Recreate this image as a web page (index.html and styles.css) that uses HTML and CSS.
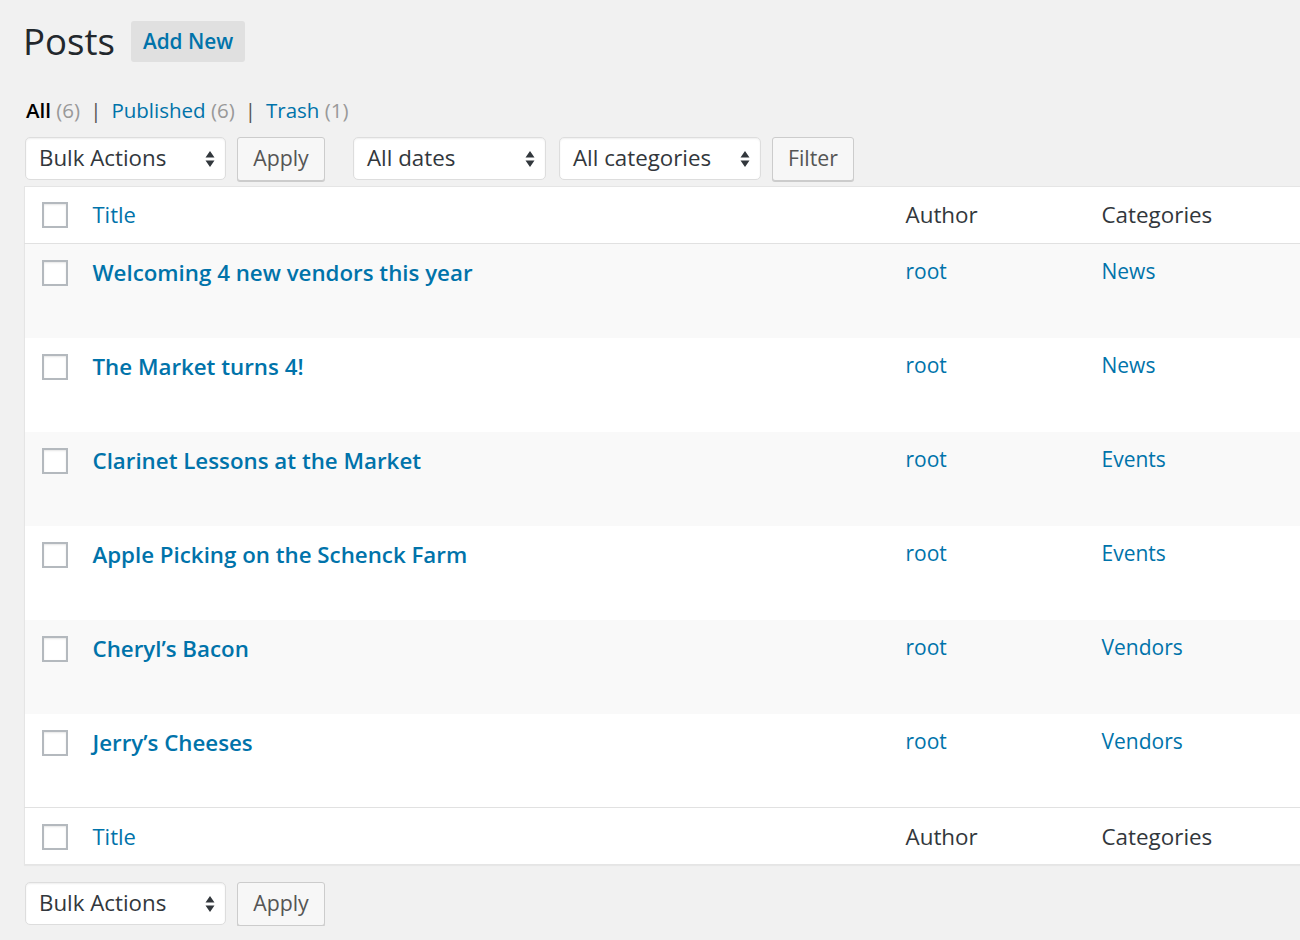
FILE: index.html
```html
<!DOCTYPE html>
<html>
<head>
<meta charset="utf-8">
<link rel="stylesheet" href="styles.css">
</head>
<body>
<div class="wrap">
  <div class="title-bar">
    <h1 class="page-title">Posts</h1>
    <a class="add-new">Add New</a>
  </div>
  <ul class="subsubsub">
    <li><a class="current">All <span class="count">(6)</span></a><span class="sep">|</span></li>
    <li><a>Published <span class="count">(6)</span></a><span class="sep">|</span></li>
    <li><a>Trash <span class="count">(1)</span></a></li>
  </ul>
  <div class="tablenav">
    <div class="select sel-bulk">Bulk Actions<span class="arrows"><svg width="10" height="18" viewBox="0 0 10 18"><path d="M5 1 L9.5 7.5 H0.5 Z M0.5 10.5 H9.5 L5 17 Z" fill="#32373c"/></svg></span></div>
    <button class="btn btn-apply">Apply</button>
    <div class="select sel-dates">All dates<span class="arrows"><svg width="10" height="18" viewBox="0 0 10 18"><path d="M5 1 L9.5 7.5 H0.5 Z M0.5 10.5 H9.5 L5 17 Z" fill="#32373c"/></svg></span></div>
    <div class="select sel-cats">All categories<span class="arrows"><svg width="10" height="18" viewBox="0 0 10 18"><path d="M5 1 L9.5 7.5 H0.5 Z M0.5 10.5 H9.5 L5 17 Z" fill="#32373c"/></svg></span></div>
    <button class="btn btn-filter">Filter</button>
  </div>
  <table class="posts">
    <colgroup>
      <col class="c-check"><col class="c-title"><col class="c-author"><col class="c-cats">
    </colgroup>
    <thead>
      <tr><td class="check"><span class="cb"></span></td><th class="sortable"><a>Title</a></th><th>Author</th><th>Categories</th></tr>
    </thead>
    <tbody>
      <tr class="alt"><td class="check"><span class="cb"></span></td><td class="title-cell"><a class="row-title">Welcoming 4 new vendors this year</a></td><td><a>root</a></td><td><a>News</a></td></tr>
      <tr><td class="check"><span class="cb"></span></td><td class="title-cell"><a class="row-title">The Market turns 4!</a></td><td><a>root</a></td><td><a>News</a></td></tr>
      <tr class="alt"><td class="check"><span class="cb"></span></td><td class="title-cell"><a class="row-title">Clarinet Lessons at the Market</a></td><td><a>root</a></td><td><a>Events</a></td></tr>
      <tr><td class="check"><span class="cb"></span></td><td class="title-cell"><a class="row-title">Apple Picking on the Schenck Farm</a></td><td><a>root</a></td><td><a>Events</a></td></tr>
      <tr class="alt"><td class="check"><span class="cb"></span></td><td class="title-cell"><a class="row-title">Cheryl’s Bacon</a></td><td><a>root</a></td><td><a>Vendors</a></td></tr>
      <tr><td class="check"><span class="cb"></span></td><td class="title-cell"><a class="row-title">Jerry’s Cheeses</a></td><td><a>root</a></td><td><a>Vendors</a></td></tr>
    </tbody>
    <tfoot>
      <tr><td class="check"><span class="cb"></span></td><th class="sortable"><a>Title</a></th><th>Author</th><th>Categories</th></tr>
    </tfoot>
  </table>
  <div class="tablenav bottom">
    <div class="select sel-bulk">Bulk Actions<span class="arrows"><svg width="10" height="18" viewBox="0 0 10 18"><path d="M5 1 L9.5 7.5 H0.5 Z M0.5 10.5 H9.5 L5 17 Z" fill="#32373c"/></svg></span></div>
    <button class="btn btn-apply">Apply</button>
  </div>
</div>
</body>
</html>
```

FILE: styles.css
```css
html, body {
  margin: 0;
  padding: 0;
  background: #f1f1f1;
  overflow: hidden;
}
body {
  font-family: "Open Sans", "Noto Sans", sans-serif;
  color: #23282d;
  font-size: 21px;
}
.wrap {
  padding: 0 0 0 24px;
}
.title-bar {
  display: flex;
  align-items: center;
  padding-top: 21px;
  height: 41px;
}
.page-title {
  margin: 0 0 0 -1px;
  font-size: 36.6px;
  font-weight: 400;
  line-height: 41px;
  color: #23282d;
}
.add-new {
  margin-left: 16px;
  height: 41px;
  line-height: 41px;
  padding: 0 12px;
  background: #e0e0e0;
  border-radius: 3px;
  color: #0073aa;
  font-weight: 600;
  font-size: 20.8px;
}
.subsubsub {
  list-style: none;
  margin: 0;
  padding: 0;
  display: flex;
  margin-top: 33px;
  height: 30px;
  line-height: 30px;
  font-size: 20.5px;
  color: #666;
}
.subsubsub li {
  display: flex;
}
.subsubsub a {
  color: #0073aa;
}
.subsubsub a.current {
  color: #000;
  font-weight: 600;
  margin-left: 2px;
}
.subsubsub .count {
  color: #999;
  font-weight: 400;
}
.subsubsub .sep {
  margin: 0 10px 0 10px;
  color: #555;
}
.tablenav {
  display: flex;
  align-items: flex-start;
  margin-top: 12px;
  height: 44px;
}
.select {
  box-sizing: border-box;
  height: 43px;
  margin-left: 1px;
  background: #fff;
  border: 1px solid #ddd;
  border-radius: 5px;
  box-shadow: inset 0 1px 2px rgba(0,0,0,.07);
  display: flex;
  align-items: center;
  padding-left: 13px;
  padding-bottom: 3px;
  font-size: 22.3px;
  color: #32373c;
}
.arrows {
  margin-left: auto;
  margin-right: 10px;
  padding-top: 3px;
  display: flex;
  align-items: center;
}
.sel-bulk { width: 201px; }
.sel-dates { width: 193px; margin-left: 28px; }
.sel-cats { width: 202px; margin-left: 13px; }
.btn {
  box-sizing: border-box;
  height: 44px;
  margin: 0;
  padding: 0 0 4px;
  background: #f7f7f7;
  border: 1px solid #ccc;
  border-radius: 3px;
  box-shadow: 0 1px 0 #ccc;
  font-family: "Open Sans", "Noto Sans", sans-serif;
  font-size: 21.3px;
  color: #555;
}
.btn-apply { width: 88px; margin-left: 11px; }
.btn-filter { width: 82px; margin-left: 11px; }
.posts {
  margin-top: 5px;
  width: calc(100% + 4px);
  border-collapse: collapse;
  table-layout: fixed;
  background: #fff;
  border: 1px solid #e5e5e5;
  box-shadow: 0 1px 1px rgba(0,0,0,.04);
}
.c-check { width: 54px; }
.c-title { width: 813px; }
.c-author { width: 196px; }
.posts th, .posts td {
  text-align: left;
  font-weight: 400;
  vertical-align: top;
  padding: 0 0 0 14px;
}
.posts a {
  color: #0073aa;
}
.posts thead th, .posts thead td, .posts tfoot th, .posts tfoot td {
  padding-top: 13px;
  padding-bottom: 13px;
  line-height: 30px;
  font-size: 22.4px;
  color: #32373c;
}
.posts thead tr { border-bottom: 1px solid #e1e1e1; }
.posts tfoot tr { border-top: 1px solid #e1e1e1; }
.posts thead th.sortable, .posts tfoot th.sortable {
  padding-top: 12px;
  padding-bottom: 14px;
  font-size: 22px;
}
.posts tfoot th, .posts tfoot td {
  padding-top: 14px;
  padding-bottom: 12px;
}
.posts tfoot th.sortable {
  padding-top: 13px;
  padding-bottom: 13px;
}
.posts tbody td {
  height: 94px;
  box-sizing: border-box;
  padding-top: 12px;
  line-height: 30px;
  font-size: 21px;
}
.posts tbody td.title-cell {
  padding-top: 14px;
}
.posts tbody tr.alt { background: #f9f9f9; }
.row-title {
  font-weight: 600;
  font-size: 22.3px;
}
.posts td.check {
  padding: 0 0 0 17px;
}
.posts thead td.check {
  padding-top: 15px;
  padding-bottom: 0;
}
.posts tfoot td.check {
  padding-top: 16px;
  padding-bottom: 0;
}
.posts tbody td.check {
  padding-top: 16px;
}
.cb {
  display: block;
  box-sizing: border-box;
  width: 26px;
  height: 26px;
  background: #fff;
  border: 2px solid #b4b9be;
  box-shadow: inset 0 1px 2px rgba(0,0,0,.1);
}
.tablenav.bottom {
  margin-top: 17px;
}
```
